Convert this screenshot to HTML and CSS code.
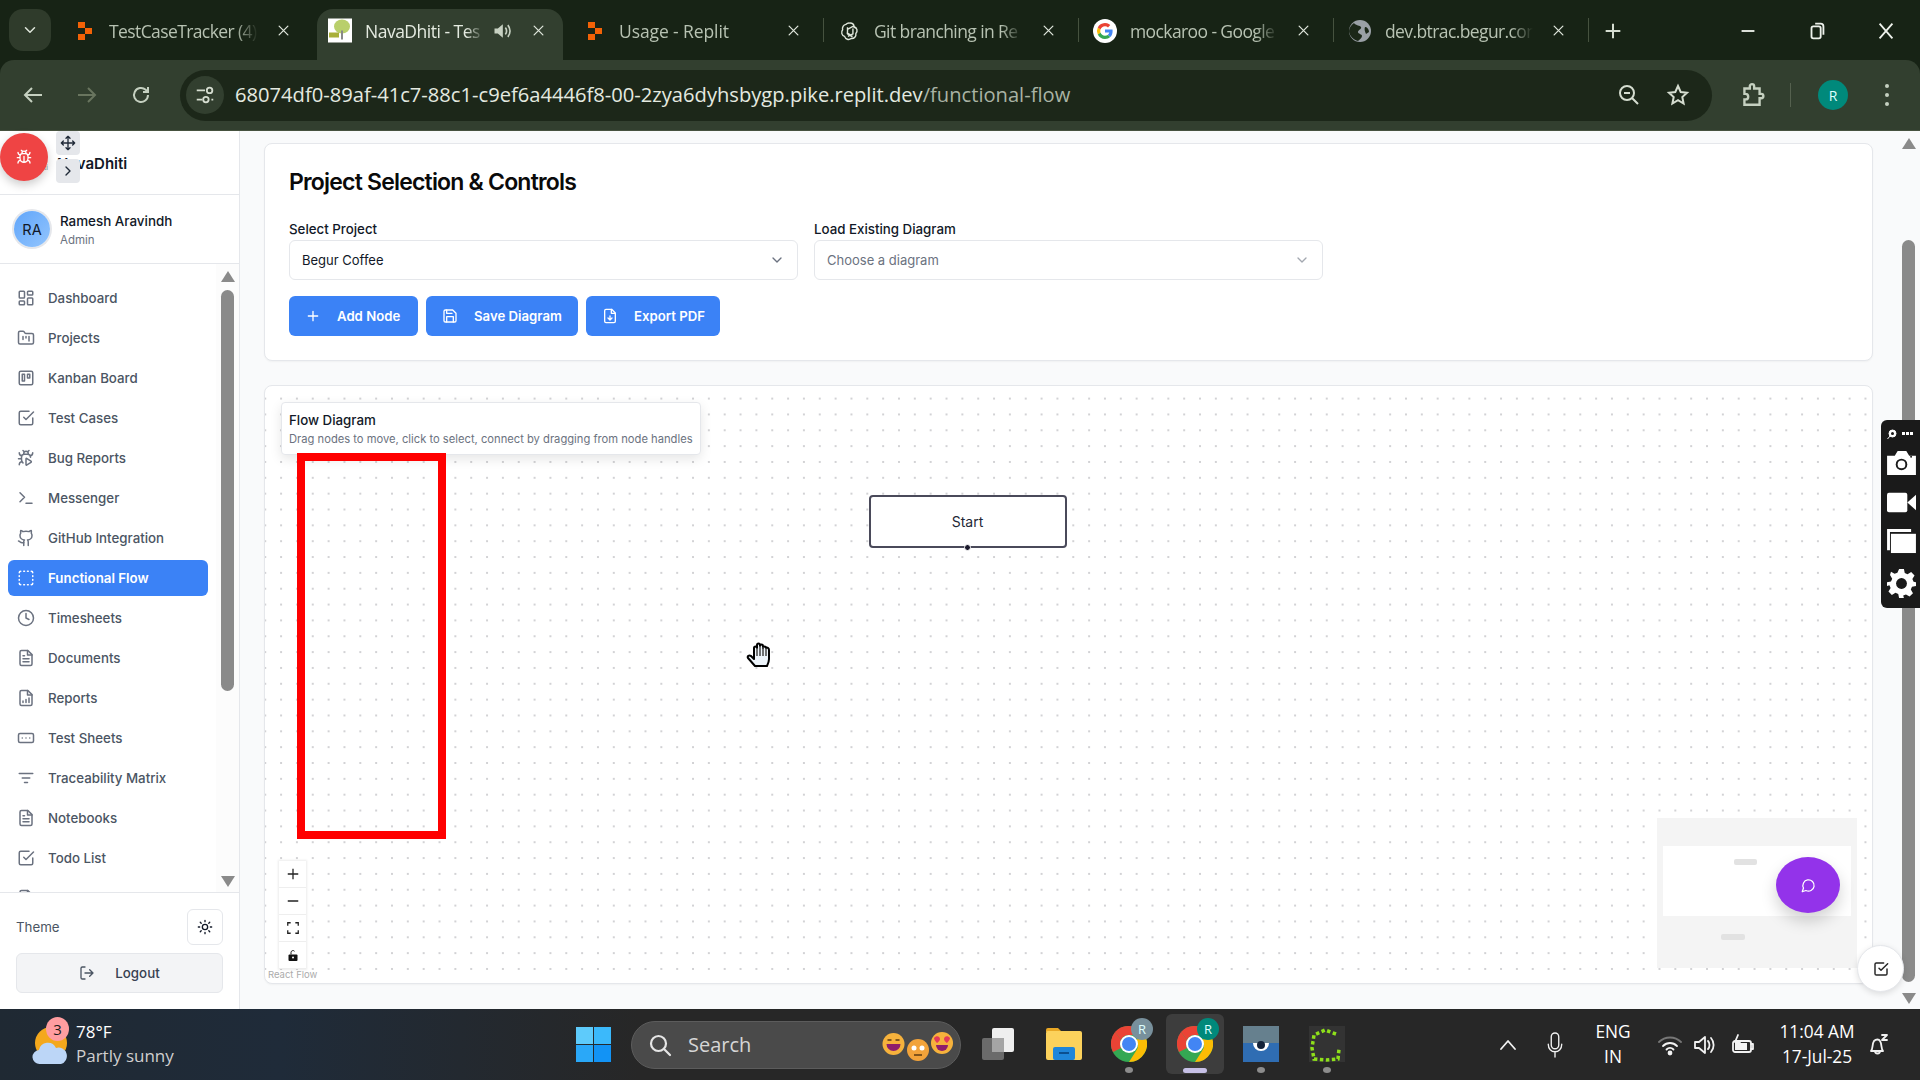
FILE: index.html
```html
<!DOCTYPE html>
<html lang="en">
<head>
<meta charset="utf-8">
<title>NavaDhiti - Functional Flow</title>
<link rel="stylesheet" href="styles.css">
</head>
<body>
<svg class="sprite" aria-hidden="true">
  <symbol id="i-dash" viewBox="0 0 24 24"><rect x="3" y="3" width="7" height="9" rx="1"/><rect x="14" y="3" width="7" height="5" rx="1"/><rect x="14" y="12" width="7" height="9" rx="1"/><rect x="3" y="16" width="7" height="5" rx="1"/></symbol>
  <symbol id="i-proj" viewBox="0 0 24 24"><path d="M4 20h16a2 2 0 0 0 2-2V8a2 2 0 0 0-2-2h-7.93a2 2 0 0 1-1.66-.9l-.82-1.2A2 2 0 0 0 7.93 3H4a2 2 0 0 0-2 2v13c0 1.1.9 2 2 2Z"/><path d="M8 10v4M12 10v2M16 10v6"/></symbol>
  <symbol id="i-kanban" viewBox="0 0 24 24"><rect x="3" y="3" width="18" height="18" rx="2"/><rect x="7" y="7" width="3" height="9"/><rect x="14" y="7" width="3" height="5"/></symbol>
  <symbol id="i-check" viewBox="0 0 24 24"><path d="m9 11 3 3L22 4"/><path d="M21 12v7a2 2 0 0 1-2 2H5a2 2 0 0 1-2-2V5a2 2 0 0 1 2-2h11"/></symbol>
  <symbol id="i-bugplay" viewBox="0 0 24 24"><path d="M12.765 21.522a.5.5 0 0 1-.765-.424v-8.196a.5.5 0 0 1 .765-.424l5.878 3.674a1 1 0 0 1 0 1.696z"/><path d="M14.12 3.88 16 2M18 11a4 4 0 0 0-4-4h-4a4 4 0 0 0-4 4v3a6.1 6.1 0 0 0 2 4.5M20.97 5c0 2.1-1.6 3.8-3.5 4M3 21c0-2.1 1.7-3.9 3.8-4M6 13H2M6.53 9C4.6 8.8 3 7.1 3 5M8 2l1.88 1.88M9 7.13v-1a3 3 0 0 1 6 0v1"/></symbol>
  <symbol id="i-term" viewBox="0 0 24 24"><path d="m4 17 6-6-6-6M12 19h8"/></symbol>
  <symbol id="i-github" viewBox="0 0 24 24"><path d="M15 22v-4a4.8 4.8 0 0 0-1-3.5c3 0 6-2 6-5.5.08-1.25-.27-2.48-1-3.5.28-1.15.28-2.35 0-3.5 0 0-1 0-3 1.5-2.64-.5-5.36-.5-8 0C6 2 5 2 5 2c-.3 1.15-.3 2.35 0 3.5A5.403 5.403 0 0 0 4 9c0 3.5 3 5.5 6 5.5-.39.49-.68 1.05-.85 1.65-.17.6-.22 1.23-.15 1.85v4"/><path d="M9 18c-4.51 2-5-2-7-2"/></symbol>
  <symbol id="i-flow" viewBox="0 0 24 24"><path d="M5 3a2 2 0 0 0-2 2M9 3h1M14 3h1M19 3a2 2 0 0 1 2 2M21 9v1M21 14v1M21 19a2 2 0 0 1-2 2M14 21h1M9 21h1M5 21a2 2 0 0 1-2-2M3 14v1M3 9v1"/></symbol>
  <symbol id="i-clock" viewBox="0 0 24 24"><circle cx="12" cy="12" r="10"/><path d="M12 6v6l4 2"/></symbol>
  <symbol id="i-file" viewBox="0 0 24 24"><path d="M14.5 2H6a2 2 0 0 0-2 2v16a2 2 0 0 0 2 2h12a2 2 0 0 0 2-2V7.5L14.5 2z"/><path d="M14 2v6h6M16 13H8M16 17H8M10 9H8"/></symbol>
  <symbol id="i-report" viewBox="0 0 24 24"><path d="M14.5 2H6a2 2 0 0 0-2 2v16a2 2 0 0 0 2 2h12a2 2 0 0 0 2-2V7.5L14.5 2z"/><path d="M14 2v6h6M8 18v-2M12 18v-4M16 18v-6"/></symbol>
  <symbol id="i-sheet" viewBox="0 0 24 24"><rect x="2" y="6" width="20" height="12" rx="2"/><path d="M12 12h.01M17 12h.01M7 12h.01"/></symbol>
  <symbol id="i-filter" viewBox="0 0 24 24"><path d="M3 6h18M7 12h10M10 18h4"/></symbol>
  <symbol id="i-chevdown" viewBox="0 0 24 24"><path d="m6 9 6 6 6-6"/></symbol>
  <symbol id="i-x" viewBox="0 0 24 24"><path d="M5 5l14 14M19 5 5 19"/></symbol>
  <symbol id="i-replit" viewBox="0 0 20 20"><path d="M3 1h7v6H3zM10 7h7v6h-7zM3 13h7v6H3z" fill="#f26207" stroke="none"/></symbol>
  <symbol id="chrome" viewBox="0 0 36 36"><circle cx="18" cy="18" r="18" fill="#34a853" stroke="none"/><path d="M18 0a18 18 0 0 1 15.600 9H18a9 9 0 0 0-8 5L4 6A18 18 0 0 1 18 0z" fill="#ea4335" stroke="none"/><path d="M2 26A18 18 0 0 1 4 6l6 8a9 9 0 0 0 0 8z" fill="#ea4335" stroke="none"/><path d="M33.600 9A18 18 0 0 1 18 36l7-11a9 9 0 0 0 0-11z" fill="#fbbc05" stroke="none"/><circle cx="18" cy="18" r="9" fill="#fff" stroke="none"/><circle cx="18" cy="18" r="7" fill="#4285f4" stroke="none"/></symbol>
</svg>

<header class="browser">
  <div class="tabstrip">
    <button class="tabs-btn"><svg class="ic16"><use href="#i-chevdown"/></svg></button>
    <div class="tab">
      <svg class="fav"><use href="#i-replit"/></svg>
      <span class="tab-title tight">TestCaseTracker (4)</span>
      <svg class="tab-x"><use href="#i-x"/></svg>
    </div>
    <div class="tab active">
      <svg class="fav-lg" viewBox="0 0 24 24"><rect width="24" height="24" fill="#fff"/><ellipse cx="14" cy="8" rx="8" ry="7" fill="#b9cf6b"/><rect x="13" y="12" width="2" height="9" fill="#888"/><rect x="1" y="14" width="10" height="5" fill="#a9b03a"/></svg>
      <span class="tab-title tighter">NavaDhiti - Tes</span>
      <svg class="tab-audio" viewBox="0 0 24 24"><path class="audio-body" d="M3 9v6h4l6 5V4L7 9z"/><path class="audio-wave" d="M16 8c2 2 2 6 0 8M19 5c3.500 4 3.500 10 0 14"/></svg>
      <svg class="tab-x"><use href="#i-x"/></svg>
    </div>
    <div class="tab">
      <svg class="fav"><use href="#i-replit"/></svg>
      <span class="tab-title">Usage - Replit</span>
      <svg class="tab-x"><use href="#i-x"/></svg>
      <i class="tab-sep"></i>
    </div>
    <div class="tab">
      <svg class="fav" viewBox="0 0 24 24"><path class="gpt" d="M12 2.500a5 5 0 0 1 5 4.200 5 5 0 0 1 2 8.300 5 5 0 0 1-5.500 6 5 5 0 0 1-8-2.500 5 5 0 0 1-2.300-8 5 5 0 0 1 4-6.500A5 5 0 0 1 12 2.500zM9 7.500v8l6 3.500M9 10l6.500-3.500 4 2.500M8 14l7 4M15.500 9v6.500l-6 3"/></svg>
      <span class="tab-title tight">Git branching in Re</span>
      <svg class="tab-x"><use href="#i-x"/></svg>
      <i class="tab-sep"></i>
    </div>
    <div class="tab">
      <svg class="fav-g" viewBox="0 0 24 24"><circle cx="12" cy="12" r="12" fill="#fff"/><path d="M19.600 12.200c0-.6 0-1.100-.1-1.600H12v3h4.300a3.700 3.700 0 0 1-1.600 2.400l2.600 2c1.500-1.400 2.300-3.400 2.300-5.800z" fill="#4285f4"/><path d="M12 20c2.200 0 4-.7 5.300-2l-2.600-2c-.7.500-1.600.8-2.700.8-2.100 0-3.900-1.400-4.500-3.300l-2.700 2.100A8 8 0 0 0 12 20z" fill="#34a853"/><path d="M7.500 13.500a4.800 4.800 0 0 1 0-3L4.800 8.400a8 8 0 0 0 0 7.200z" fill="#fbbc05"/><path d="M12 7.200c1.200 0 2.200.4 3 1.200l2.300-2.300A8 8 0 0 0 4.800 8.400l2.700 2.100c.6-1.900 2.400-3.300 4.500-3.300z" fill="#ea4335"/></svg>
      <span class="tab-title tight">mockaroo - Google</span>
      <svg class="tab-x"><use href="#i-x"/></svg>
      <i class="tab-sep"></i>
    </div>
    <div class="tab">
      <svg class="fav-g" viewBox="0 0 24 24"><circle cx="12" cy="12" r="11" fill="#9aa0a6"/><path d="M6 4c2 3 6 2 7 4s-3 3-3 5 4 2 4 4-2 3-4 5c-4-1-9-5-9-10 0-3 2-6 5-8zM17 8c2 0 4 2 4 5l-3 2c-1-2-2-5-1-7z" fill="#1b2718"/></svg>
      <span class="tab-title tight">dev.btrac.begur.com</span>
      <svg class="tab-x"><use href="#i-x"/></svg>
      <i class="tab-sep"></i>
    </div>
    <svg class="new-tab" viewBox="0 0 24 24"><path d="M12 4v16M4 12h16"/></svg>
    <div class="win-ctrls">
      <svg class="win-ic" viewBox="0 0 24 24"><path d="M5 12h14"/></svg>
      <svg class="win-ic" viewBox="0 0 24 24"><rect x="6" y="7" width="10" height="13" rx="2"/><path d="M10 4h6a3 3 0 0 1 3 3v9"/></svg>
      <svg class="win-ic" viewBox="0 0 24 24"><path d="M5 4l14 16M19 4 5 20"/></svg>
    </div>
  </div>
  <div class="toolbar">
    <svg class="nav-ic" viewBox="0 0 24 24"><path d="M21 12H4M11 5l-7 7 7 7"/></svg>
    <svg class="nav-ic dim" viewBox="0 0 24 24"><path d="M3 12h17M13 5l7 7-7 7"/></svg>
    <svg class="nav-ic" viewBox="0 0 24 24"><path d="M19 12a7 7 0 1 1-2.300-5.200L19 9M19 4v5h-5"/></svg>
    <div class="omnibox">
      <span class="site-btn"><svg class="site-ic" viewBox="0 0 24 24"><path d="M3 7h9M19 17h2M3 17h6"/><circle cx="17" cy="7" r="3"/><circle cx="13" cy="17" r="3"/></svg></span>
      <span class="url">68074df0-89af-41c7-88c1-c9ef6a4446f8-00-2zya6dyhsbygp.pike.replit.dev<span class="url-path">/functional-flow</span></span>
      <svg class="omni-ic" viewBox="0 0 24 24"><circle cx="10" cy="10" r="7"/><path d="M7 10h6M15 15l6 6"/></svg>
      <svg class="omni-ic" viewBox="0 0 24 24"><path d="m12 3 2.700 6 6.300.700-4.700 4.300 1.300 6.500-5.600-3.300-5.600 3.300 1.300-6.500L3 9.700 9.300 9z"/></svg>
    </div>
    <svg class="ext-ic" viewBox="0 0 24 24"><path d="M5 6h5V4a2 2 0 0 1 4 0v2h5v5h1.500a2 2 0 0 1 0 4H19v6H5v-5h1a2.500 2.500 0 0 0 0-5H5z"/></svg>
    <i class="tool-sep"></i>
    <span class="profile">R</span>
    <span class="kebab"><i></i><i></i><i></i></span>
  </div>
</header>

<div class="page">
  <aside class="sidebar">
    <div class="brand">
      <span class="brand-logo">iti</span>
      <span class="brand-name">NavaDhiti</span>
    </div>
    <div class="user">
      <span class="avatar">RA</span>
      <div class="user-text">
        <div class="user-name">Ramesh Aravindh</div>
        <div class="user-role">Admin</div>
      </div>
    </div>
    <div class="nav-wrap">
      <nav class="nav">
        <a class="nav-item"><svg class="nav-svg"><use href="#i-dash"/></svg>Dashboard</a>
        <a class="nav-item"><svg class="nav-svg"><use href="#i-proj"/></svg>Projects</a>
        <a class="nav-item"><svg class="nav-svg"><use href="#i-kanban"/></svg>Kanban Board</a>
        <a class="nav-item"><svg class="nav-svg"><use href="#i-check"/></svg>Test Cases</a>
        <a class="nav-item"><svg class="nav-svg"><use href="#i-bugplay"/></svg>Bug Reports</a>
        <a class="nav-item"><svg class="nav-svg"><use href="#i-term"/></svg>Messenger</a>
        <a class="nav-item"><svg class="nav-svg"><use href="#i-github"/></svg>GitHub Integration</a>
        <a class="nav-item current"><svg class="nav-svg"><use href="#i-flow"/></svg>Functional Flow</a>
        <a class="nav-item"><svg class="nav-svg"><use href="#i-clock"/></svg>Timesheets</a>
        <a class="nav-item"><svg class="nav-svg"><use href="#i-file"/></svg>Documents</a>
        <a class="nav-item"><svg class="nav-svg"><use href="#i-report"/></svg>Reports</a>
        <a class="nav-item"><svg class="nav-svg"><use href="#i-sheet"/></svg>Test Sheets</a>
        <a class="nav-item"><svg class="nav-svg"><use href="#i-filter"/></svg>Traceability Matrix</a>
        <a class="nav-item"><svg class="nav-svg"><use href="#i-file"/></svg>Notebooks</a>
        <a class="nav-item"><svg class="nav-svg"><use href="#i-check"/></svg>Todo List</a>
        <a class="nav-item partial"><svg class="nav-svg"><use href="#i-file"/></svg></a>
      </nav>
      <div class="sbar side-bar">
        <i class="arrow up"></i>
        <i class="thumb"></i>
        <i class="spacer"></i>
        <i class="arrow down"></i>
      </div>
    </div>
    <div class="side-foot">
      <div class="theme-row">
        <span class="theme-label">Theme</span>
        <button class="theme-btn"><svg class="sun" viewBox="0 0 24 24"><circle cx="12" cy="12" r="4"/><path d="M12 2v2M12 20v2M4.900 4.900l1.400 1.400M17.700 17.700l1.400 1.400M2 12h2M20 12h2M6.300 17.700l-1.400 1.400M19.100 4.900l-1.400 1.400"/></svg></button>
      </div>
      <button class="logout"><svg class="logout-ic" viewBox="0 0 24 24"><path d="M9 21H5a2 2 0 0 1-2-2V5a2 2 0 0 1 2-2h4M16 17l5-5-5-5M21 12H9"/></svg>Logout</button>
    </div>
  </aside>

  <main class="main">
    <section class="card controls">
      <h1 class="card-title">Project Selection &amp; Controls</h1>
      <div class="fields">
        <div class="field">
          <label class="field-label">Select Project</label>
          <div class="select"><span>Begur Coffee</span><svg class="sel-ic"><use href="#i-chevdown"/></svg></div>
        </div>
        <div class="field">
          <label class="field-label">Load Existing Diagram</label>
          <div class="select placeholder"><span>Choose a diagram</span><svg class="sel-ic"><use href="#i-chevdown"/></svg></div>
        </div>
      </div>
      <div class="actions">
        <button class="btn add"><svg class="btn-ic" viewBox="0 0 24 24"><path d="M5 12h14M12 5v14"/></svg>Add Node</button>
        <button class="btn save"><svg class="btn-ic" viewBox="0 0 24 24"><path d="M19 21H5a2 2 0 0 1-2-2V5a2 2 0 0 1 2-2h11l5 5v11a2 2 0 0 1-2 2z"/><path d="M17 21v-8H7v8M7 3v5h8"/></svg>Save Diagram</button>
        <button class="btn export"><svg class="btn-ic" viewBox="0 0 24 24"><path d="M14.500 2H6a2 2 0 0 0-2 2v16a2 2 0 0 0 2 2h12a2 2 0 0 0 2-2V7.500L14.500 2z"/><path d="M14 2v6h6M12 18v-6M9 15l3 3 3-3"/></svg>Export PDF</button>
      </div>
    </section>

    <section class="card canvas">
      <div class="flow-panel">
        <div class="flow-title">Flow Diagram</div>
        <div class="flow-sub">Drag nodes to move, click to select, connect by dragging from node handles</div>
      </div>
      <div class="red-box"></div>
      <div class="node">Start<i class="handle"></i></div>
      <div class="rf-controls">
        <span class="rf-btn"><svg class="rf-ic" viewBox="0 0 24 24"><path d="M12 3v18M3 12h18"/></svg></span>
        <span class="rf-btn"><svg class="rf-ic" viewBox="0 0 24 24"><path d="M3 12h18"/></svg></span>
        <span class="rf-btn"><svg class="rf-ic" viewBox="0 0 24 24"><path d="M3 8V3h5M16 3h5v5M21 16v5h-5M8 21H3v-5"/></svg></span>
        <span class="rf-btn"><svg class="rf-lock" viewBox="0 0 24 24"><rect x="3" y="10" width="18" height="13" rx="2"/><path class="lock-arc" d="M8 10V6a4 4 0 0 1 7-2.500"/><circle class="lock-hole" cx="12" cy="16" r="2"/></svg></span>
      </div>
      <span class="rf-attr">React Flow</span>
      <div class="minimap">
        <div class="mm-view"><i class="mm-node"></i></div>
        <i class="mm-node2"></i>
      </div>
      <button class="chat"><svg class="chat-ic" viewBox="0 0 24 24"><path d="M7.900 20A9 9 0 1 0 4 16.100L2 22Z"/></svg></button>
    </section>
  </main>

  <div class="sbar page-bar">
    <i class="arrow up"></i>
    <i class="thumb"></i>
    <i class="arrow down"></i>
  </div>

  <button class="bug-fab"><svg class="bug-ic" viewBox="0 0 24 24"><path d="M8 2l1.880 1.880M14.120 3.880 16 2M9 7.130v-1a3 3 0 1 1 6 0v1M12 20c-3.300 0-6-2.700-6-6v-3a4 4 0 0 1 4-4h4a4 4 0 0 1 4 4v3c0 3.300-2.700 6-6 6M12 20v-9M6.530 9C4.600 8.800 3 7.100 3 5M6 13H2M3 21c0-2.100 1.700-3.900 3.800-4M20.970 5c0 2.100-1.600 3.800-3.500 4M22 13h-4M17.200 17c2.100.1 3.800 1.900 3.800 4"/></svg></button>
  <span class="mini-btn move"><svg class="mini-ic" viewBox="0 0 24 24"><path d="M12 2v20M2 12h20M9 5l3-3 3 3M9 19l3 3 3-3M5 9l-3 3 3 3M19 9l3 3-3 3"/></svg></span>
  <span class="mini-btn chev"><svg class="mini-ic" viewBox="0 0 24 24"><path d="m9 6 6 6-6 6"/></svg></span>

  <div class="cap-widget">
    <div class="cap-top"><svg class="cap-logo" viewBox="0 0 24 24"><circle cx="13" cy="11" r="7"/><circle class="cap-hole" cx="13" cy="11" r="3"/><path class="cap-tail" d="M3 22l6-7"/></svg><span class="cap-dots"><i></i><i></i><i></i></span></div>
    <svg class="cap-ic" viewBox="0 0 30 26"><path d="M0 6h8l3-5h9l3 5h7v20H0z"/><circle class="cap-hole" cx="15" cy="15" r="6"/><circle class="cap-ring" cx="15" cy="15" r="4"/><circle class="cap-hole" cx="25" cy="7" r="1"/></svg>
    <svg class="cap-ic" viewBox="0 0 30 20"><rect x="0" y="0" width="21" height="20" rx="2"/><path d="M21 10l9-8v16z"/></svg>
    <svg class="cap-ic" viewBox="0 0 30 26"><path d="M0 0h25v3H3v19H0z"/><rect x="4" y="5" width="26" height="20"/></svg>
    <svg class="cap-ic gear" viewBox="0 0 24 24"><path d="M10 0h4l.7 3.300 2.300 1 3-1.800 2.800 2.800-1.800 3 1 2.300L24 11v3l-3.300.700-1 2.300 1.800 3-2.800 2.800-3-1.800-2.300 1L14 24h-4l-.7-3.300-2.300-1-3 1.800-2.800-2.800 1.800-3-1-2.300L0 14v-3l3.300-.700 1-2.300-1.800-3L3.300 2.200l3 1.800 2.300-1z"/><circle class="cap-hole" cx="12" cy="12" r="4.500"/></svg>
  </div>

  <button class="todo-fab"><svg class="todo-ic" viewBox="0 0 24 24"><path d="M21 12v7a2 2 0 0 1-2 2H5a2 2 0 0 1-2-2V5a2 2 0 0 1 2-2h11"/><path d="m9 11 3 3L22 4"/></svg></button>

  <svg class="hand" viewBox="0 0 28 28"><path class="hand-fill" d="M9 25 2 17c-1-2 1-3 3-2l3 3V7c0-2 3-2 3 0V4c0-2 3-2 3 0v1c0-2 3-2 3 0v2c0-2 3-2 3 0 1-1 3 0 3 2v9c0 3-1 5-2 7z"/><path class="hand-line" d="M11 7v8M14 5v10M17 6v9M20 8v7"/></svg>
</div>

<footer class="taskbar">
  <div class="weather">
    <svg class="weather-ic" viewBox="0 0 36 40"><circle cx="19" cy="16" r="16" fill="#f4a81c"/><path d="M8 37a7 7 0 0 1-1-14 9 9 0 0 1 17-2 8 8 0 0 1 5 16z" fill="#bcd6f7"/></svg>
    <span class="weather-badge">3</span>
    <div class="weather-text">
      <div class="temp">78°F</div>
      <div class="cond">Partly sunny</div>
    </div>
  </div>
  <svg class="win-logo" viewBox="0 0 36 36"><rect x="0" y="0" width="17.500" height="17.500" fill="#5ecbfb"/><rect x="18.500" y="0" width="17.500" height="17.500" fill="#3bb9fb"/><rect x="0" y="18.500" width="17.500" height="17.500" fill="#2aa8f8"/><rect x="18.500" y="18.500" width="17.500" height="17.500" fill="#1293f5"/></svg>
  <div class="search">
    <svg class="search-ic" viewBox="0 0 24 24"><circle cx="10.500" cy="10.500" r="7.500"/><path d="m16 16 6 6"/></svg>
    <span class="search-text">Search</span>
    <svg class="emoji" viewBox="0 0 80 36">
      <g transform="translate(1.500 0)"><circle cx="14" cy="17" r="11" fill="#f6b23c"/><path d="M7 17h14a7 7 0 0 1-14 0z" fill="#8e1e6b"/><path d="M8 13h4M16 13h4" stroke="#5b3a12" stroke-width="1.500"/></g>
      <g transform="translate(5 -1)"><circle cx="35" cy="24" r="11" fill="#f2a33a"/><circle cx="31" cy="22" r="2.500" fill="#fff"/><circle cx="39" cy="22" r="2.500" fill="#fff"/><path d="M31 29h8" stroke="#5b3a12" stroke-width="1.500"/></g>
      <g transform="translate(8 3)"><circle cx="56" cy="13" r="11" fill="#f6b23c"/><path d="M48 8c2-3 6-2 6 1 0 2-3 4-3 4s-3-3-3-5zM58 9c0-3 4-4 6-1 0 2-3 5-3 5s-3-2-3-4z" fill="#e23a5a"/><path d="M50 15h12a6 6 0 0 1-12 0z" fill="#8e1e6b"/></g>
    </svg>
  </div>
  <div class="tb-apps">
    <span class="tb-slot"><svg class="tb-ic" viewBox="0 0 36 36"><rect x="2" y="12" width="22" height="22" rx="2" fill="#6b6b6b"/><rect x="12" y="2" width="22" height="24" rx="2" fill="#efefef"/><rect x="12" y="12" width="12" height="14" fill="#a5a5a5"/></svg></span>
    <span class="tb-slot"><svg class="tb-ic" viewBox="0 0 36 36"><path d="M0 4a2 2 0 0 1 2-2h10l4 4H0z" fill="#e9a825"/><rect x="0" y="5" width="36" height="29" rx="2" fill="#fcd25c"/><rect x="7" y="21" width="22" height="13" rx="2" fill="#1f86d9"/><rect x="13" y="26" width="10" height="2" fill="#0b4f8f"/></svg></span>
    <span class="tb-slot dotted"><svg class="tb-ic" viewBox="0 0 36 36"><use href="#chrome"/><circle cx="31" cy="3" r="11" fill="#78909c"/><text class="ic-letter" x="31" y="8">R</text></svg></span>
    <span class="tb-slot running"><svg class="tb-ic" viewBox="0 0 36 36"><use href="#chrome"/><circle cx="31" cy="3" r="11" fill="#00897b"/><text class="ic-letter" x="31" y="8">R</text></svg></span>
    <span class="tb-slot dotted"><svg class="tb-ic" viewBox="0 0 36 36"><rect width="36" height="17" fill="#66808e"/><rect y="17" width="36" height="19" fill="#2f6db3"/><path d="M10 17h16a8 8 0 0 1-16 0z" fill="#fff"/><circle cx="18" cy="19" r="4" fill="#14233a"/></svg></span>
    <span class="tb-slot dotted"><svg class="tb-ic" viewBox="0 0 36 36"><rect width="36" height="36" fill="#333"/><path d="M27 8 16 4 5 9 3 22l2 11 12 1 12-1 1-10" fill="none" stroke="#8ee01a" stroke-width="3.500" stroke-dasharray="3.500 2.500"/></svg></span>
  </div>
  <div class="tray">
    <span class="tray-slot t-up"><svg class="tray-ic" viewBox="0 0 24 24"><path d="m5 16 7-8 7 8"/></svg></span>
    <span class="tray-slot t-mic"><svg class="tray-ic tall" viewBox="0 0 24 36"><rect x="7" y="2" width="10" height="21" rx="5"/><path d="M3 17c0 6 4 10 9 10s9-4 9-10M12 27v7"/></svg></span>
    <span class="tray-slot t-lang"><span>ENG</span><span>IN</span></span>
    <span class="tray-slot t-wifi"><svg class="tray-ic" viewBox="0 0 24 24"><path class="wifi-dim" d="M1 9c6-6 16-6 22 0"/><path d="M5 13c4-4 10-4 14 0M8.500 16.500c2-2 5-2 7 0"/><circle class="wifi-dot" cx="12" cy="20" r="1.500"/></svg></span>
    <span class="tray-slot t-vol"><svg class="tray-ic" viewBox="0 0 24 24"><path d="M2 9v6h4l6 5V4L6 9zM15 8c2 2 2 6 0 8M18 5c3.500 4 3.500 10 0 14"/></svg></span>
    <span class="tray-slot t-batt"><svg class="tray-ic" viewBox="0 0 24 24"><rect x="3" y="8" width="18" height="11" rx="2"/><rect class="batt-fill" x="5" y="10" width="12" height="7"/><path d="M21 11h2v5h-2M8 2 5 9h5L7 14"/></svg></span>
    <span class="tray-slot t-time"><span>11:04 AM</span><span>17-Jul-25</span></span>
    <span class="tray-slot t-bell"><svg class="tray-ic" viewBox="0 0 24 24"><path d="M5 18c2-2 1-7 3-10 2-2 5-2 6 0 2 3 1 8 3 10zM9 18a2.500 2.500 0 0 0 5 0M16 2h5l-5 5h5"/></svg></span>
  </div>
</footer>
</body>
</html>
```
FILE: styles.css
```css
* { box-sizing: border-box; }
html, body { margin: 0; padding: 0; }
body {
  width: 1920px;
  height: 1080px;
  overflow: hidden;
  display: flex;
  flex-direction: column;
  font-family: Inter, "Noto Sans", sans-serif;
  color: #0f172a;
  background: #f9fafb;
}
button { font-family: inherit; border: 0; padding: 0; }
i { display: block; font-style: normal; }
svg { display: block; }
.sprite { position: absolute; width: 0; height: 0; }
symbol { fill: none; stroke: currentColor; stroke-width: 2; stroke-linecap: round; stroke-linejoin: round; }

/* Browser chrome */
.browser { flex: none; height: 131px; background: #172315; border-bottom: 1px solid #46523f; font-family: "Open Sans", "Noto Sans", sans-serif; }
.tabstrip { height: 60px; display: flex; align-items: flex-start; position: relative; }
.tabs-btn { width: 42px; height: 42px; margin: 9px 11px 0 9px; border-radius: 14px; background: #2f3b2b; color: #dfe6db; display: flex; align-items: center; justify-content: center; }
.ic16 { width: 18px; height: 18px; stroke-width: 3; }
.tab { width: 255px; height: 51px; margin-top: 9px; display: flex; align-items: center; padding: 0 26px 8px 13px; color: #b7c2b2; font-size: 17.500px; letter-spacing: -0.1px; position: relative; flex: none; }
.tab.active { width: 246px; margin-right: 9px; padding: 0 17px 8px 11px; background: #323f2f; color: #e4eae0; border-radius: 16px 16px 0 0; }
.tab.active .tab-x { margin-left: 19px; }
.fav { width: 20px; height: 20px; flex: none; margin-right: 14px; }
.fav-lg { width: 24px; height: 25px; flex: none; margin-right: 13px; }
.fav-g { width: 24px; height: 24px; flex: none; margin-right: 13px; margin-left: -2px; }
.gpt { fill: none; stroke: #dfe6db; stroke-width: 1.700; stroke-linejoin: round; }
.tab-title { flex: 1; min-width: 0; white-space: nowrap; overflow: hidden; -webkit-mask-image: linear-gradient(90deg, #000 85%, transparent 100%); mask-image: linear-gradient(90deg, #000 85%, transparent 100%); }
.tab-title.tight { letter-spacing: -0.6px; }
.tab-title.tighter { letter-spacing: -0.5px; }
.tab-x { width: 15px; height: 15px; flex: none; margin-left: 18px; color: #dfe6db; stroke-width: 2.500; }
.tab-audio { width: 20px; height: 20px; flex: none; margin-left: 8px; }
.audio-body { fill: #c7d1c2; }
.audio-wave { fill: none; stroke: #c7d1c2; stroke-width: 2; }
.tab-sep { position: absolute; right: 3px; top: 9px; width: 1px; height: 24px; background: #46523f; }
.new-tab { width: 22px; height: 22px; margin: 20px 0 0 10px; fill: none; stroke: #d5ddd0; stroke-width: 2.200; }
.win-ctrls { position: absolute; right: 23px; top: 20px; display: flex; gap: 47px; }
.win-ic { width: 22px; height: 22px; fill: none; stroke: #eef2ec; stroke-width: 2; }

.toolbar { height: 70px; background: #323f2f; border-radius: 14px 14px 0 0; display: flex; align-items: center; padding: 0 17px 0 21px; }
.nav-ic { width: 24px; height: 24px; fill: none; stroke: #c5d0c0; stroke-width: 2; margin-right: 30px; flex: none; }
.nav-ic.dim { stroke: #69755f; }
.nav-ic:nth-child(3) { margin-right: 27px; }
.omnibox { flex: none; width: 1532px; height: 51px; background: #1c2719; border-radius: 26px; display: flex; align-items: center; padding: 0 22px 0 6px; }
.site-btn { width: 38px; height: 38px; border-radius: 50%; background: #323f2f; display: flex; align-items: center; justify-content: center; margin-right: 11px; }
.site-ic { width: 22px; height: 22px; fill: none; stroke: #d5ddd0; stroke-width: 2; }
.url { flex: 1; font-size: 20.150px; color: #e4eae0; white-space: nowrap; margin-top: -2px; }
.url-path { color: #a9b3a4; }
.omni-ic { width: 24px; height: 24px; fill: none; stroke: #d5ddd0; stroke-width: 2; margin-left: 25px; }
.ext-ic { width: 26px; height: 26px; margin-left: 27px; fill: none; stroke: #c5d0c0; stroke-width: 2.200; flex: none; }
.tool-sep { width: 1px; height: 24px; background: #55614f; margin-left: 25px; }
.profile { width: 30px; height: 30px; margin-left: 27px; border-radius: 50%; background: #00897b; color: #dff; font-size: 14px; display: flex; align-items: center; justify-content: center; flex: none; }
.kebab { margin-left: 37px; display: flex; flex-direction: column; gap: 5px; }
.kebab i { width: 4px; height: 4px; border-radius: 50%; background: #c5d0c0; }

/* Page */
.page { flex: 1; min-height: 0; display: flex; position: relative; }
.sidebar { width: 240px; flex: none; background: #fff; border-right: 1px solid #e5e7eb; display: flex; flex-direction: column; }
.brand { height: 64px; border-bottom: 1px solid #e5e7eb; display: flex; align-items: center; padding: 2px 0 0 16px; }
.brand-logo { width: 41px; padding-right: 9px; padding-top: 8px; text-align: right; font-size: 7px; color: #8a8a8a; }
.brand-name { font-size: 15px; font-weight: 600; color: #111827; }
.user { height: 69px; border-bottom: 1px solid #e5e7eb; display: flex; align-items: center; padding-left: 14px; gap: 10px; }
.avatar { width: 36px; height: 36px; border-radius: 50%; background: linear-gradient(135deg, #60a5fa, #93c5fd); box-shadow: 0 0 0 2px #e5e7eb; display: flex; align-items: center; justify-content: center; font-size: 14.500px; color: #111827; }
.user-text { padding-top: 1px; }
.user-name { font-size: 13.400px; font-weight: 500; color: #111827; line-height: 19px; }
.user-role { font-size: 11.500px; color: #6b7280; line-height: 16px; margin-top: 1px; }
.nav-wrap { flex: 1; min-height: 0; display: flex; overflow: hidden; }
.nav { flex: 1; padding: 16px 8px 0 8px; display: flex; flex-direction: column; gap: 4px; min-width: 0; }
.nav-item { flex: none; height: 36px; display: flex; align-items: center; gap: 13px; padding: 0 9px; border-radius: 6px; font-size: 13.300px; font-weight: 500; color: #4b5563; white-space: nowrap; }
.nav-svg { width: 18px; height: 18px; flex: none; color: #6b7280; }
.nav-item.current { background: #3b82f6; color: #fff; font-weight: 600; }
.nav-item.current .nav-svg { color: #fff; }

.sbar { display: flex; flex-direction: column; align-items: center; flex: none; }
.side-bar { width: 23px; padding: 7px 0 5px; background: #fcfcfc; }
.thumb { width: 13px; border-radius: 7px; background: #8a8a8a; }
.side-bar .thumb { height: 401px; margin-top: 8px; }
.spacer { flex: 1; }
.arrow { width: 0; height: 0; border-left: 7.500px solid transparent; border-right: 7.500px solid transparent; flex: none; }
.arrow.up { border-bottom: 11px solid #8a8a8a; }
.arrow.down { border-top: 11px solid #8a8a8a; }

.side-foot { flex: none; height: 117px; border-top: 1px solid #e5e7eb; padding: 16px 16px 16px; display: flex; flex-direction: column; gap: 8px; }
.theme-row { display: flex; align-items: center; justify-content: space-between; height: 36px; }
.theme-label { font-size: 13.300px; color: #4b5563; }
.theme-btn { width: 36px; height: 36px; background: #fff; border: 1px solid #e5e7eb; border-radius: 6px; display: flex; align-items: center; justify-content: center; }
.sun { width: 16px; height: 16px; fill: none; stroke: #111827; stroke-width: 2; stroke-linecap: round; }
.logout { height: 40px; background: #f3f4f6; border: 1px solid #e5e7eb; border-radius: 6px; display: flex; align-items: center; justify-content: center; gap: 20px; font-size: 13.300px; font-weight: 500; color: #374151; }
.logout-ic { width: 16px; height: 16px; fill: none; stroke: #4b5563; stroke-width: 2; stroke-linecap: round; stroke-linejoin: round; }

.main { flex: 1; min-width: 0; padding: 12px 24px 0; display: flex; flex-direction: column; gap: 24px; }
.card { background: #fff; border: 1px solid #e5e7eb; border-radius: 8px; box-shadow: 0 1px 2px rgba(0,0,0,.04); }
.controls { height: 218px; flex: none; padding: 24px 24px 0; }
.card-title { margin: 0; font-size: 23px; line-height: 28px; font-weight: 600; letter-spacing: -0.8px; color: #0a0a0a; }
.fields { display: flex; gap: 16px; margin-top: 24px; }
.field { width: 509px; }
.field-label { display: block; font-size: 13.300px; font-weight: 500; line-height: 18px; color: #111827; margin-bottom: 2px; }
.select { height: 40px; border: 1px solid #e5e7eb; border-radius: 6px; display: flex; align-items: center; justify-content: space-between; padding: 0 12px; font-size: 13px; color: #111827; }
.select.placeholder { color: #6b7280; }
.sel-ic { width: 16px; height: 16px; color: #6b7280; }
.placeholder .sel-ic { color: #a3a8b0; }
.actions { display: flex; gap: 8px; margin-top: 16px; }
.btn { height: 40px; background: #3b82f6; color: #fff; border-radius: 6px; display: flex; align-items: center; font-size: 13.200px; font-weight: 600; }
.btn.add { width: 129px; padding-left: 16px; gap: 16px; }
.btn.save { width: 152px; padding-left: 16px; gap: 16px; }
.btn.export { width: 134px; padding-left: 16px; gap: 16px; }
.btn-ic { width: 16px; height: 16px; flex: none; fill: none; stroke: #fff; stroke-width: 2; stroke-linecap: round; stroke-linejoin: round; }

.canvas { height: 599px; flex: none; position: relative; overflow: hidden; background-color: #fff; background-image: radial-gradient(circle at center, #bcbcc0 0.5px, transparent 1.100px); background-size: 15.850px 15.850px; background-position: -7.700px 4.680px; }
.flow-panel { position: absolute; left: 16px; top: 16px; width: 420px; height: 53px; background: #fff; border: 1px solid #e5e7eb; border-radius: 4px; box-shadow: 0 4px 12px rgba(0,0,0,.1); padding: 9px 7px 0; z-index: 1; }
.flow-title { font-size: 13.300px; font-weight: 500; color: #111827; line-height: 17px; }
.flow-sub { font-size: 11.200px; color: #6b7280; line-height: 15px; margin-top: 3px; white-space: nowrap; }
.red-box { position: absolute; left: 32px; top: 67px; width: 149px; height: 386px; border: 8px solid #ff0000; z-index: 2; }
.node { position: absolute; left: 603.500px; top: 109px; width: 198px; height: 53px; background: #fff; border: 2px solid #4a4a5a; border-radius: 4px; display: flex; align-items: center; justify-content: center; font-size: 14px; color: #1f2937; }
.handle { position: absolute; left: 93px; bottom: -5px; width: 5px; height: 5px; border-radius: 50%; background: #1a192b; border: 1px solid #fff; box-sizing: content-box; }
.rf-controls { position: absolute; left: 14px; top: 475px; width: 27px; background: #fff; box-shadow: 0 0 2px 1px rgba(0,0,0,.08); display: flex; flex-direction: column; }
.rf-btn { height: 27px; border-bottom: 1px solid #eee; display: flex; align-items: center; justify-content: center; }
.rf-ic { width: 14px; height: 14px; fill: none; stroke: #222; stroke-width: 2.200; }
.rf-lock { width: 12px; height: 13px; fill: #111; }
.lock-arc { fill: none; stroke: #111; stroke-width: 2; }
.lock-hole { fill: #fff; }
.rf-attr { position: absolute; left: 3px; bottom: 3px; font-size: 9.500px; color: #ababab; }
.minimap { position: absolute; right: 15px; bottom: 15px; width: 200px; height: 150px; background: #f4f4f4; }
.mm-view { position: absolute; left: 6px; top: 28px; width: 188px; height: 70px; background: #fff; }
.mm-node { position: absolute; left: 71px; top: 13px; width: 23px; height: 6px; background: #e2e2e2; border-radius: 2px; }
.mm-node2 { position: absolute; left: 64px; top: 116px; width: 24px; height: 6px; background: #e2e2e2; border-radius: 2px; }
.chat { position: absolute; left: 1511px; top: 471px; width: 64px; height: 56px; border-radius: 50%; background: #9333ea; box-shadow: 0 8px 16px rgba(0,0,0,.18); display: flex; align-items: center; justify-content: center; }
.chat-ic { width: 15px; height: 15px; fill: none; stroke: #fff; stroke-width: 2; stroke-linejoin: round; }

.page-bar { width: 23px; padding: 7px 0 5px; }
.page-bar .thumb { height: 742px; margin-top: 91px; margin-bottom: 11px; }

.bug-fab { position: absolute; left: 0; top: 2px; width: 48px; height: 48px; border-radius: 50%; background: #ef4444; box-shadow: 0 4px 10px rgba(0,0,0,.2); display: flex; align-items: center; justify-content: center; }
.bug-ic { width: 16px; height: 16px; fill: none; stroke: #fff; stroke-width: 2; stroke-linecap: round; }
.mini-btn { position: absolute; left: 56px; width: 24px; height: 24px; border-radius: 4px; background: #e5e7eb; display: flex; align-items: center; justify-content: center; }
.mini-btn.move { top: 0; }
.mini-btn.chev { top: 28px; }
.mini-ic { width: 16px; height: 16px; fill: none; stroke: #1f2937; stroke-width: 2; stroke-linecap: round; stroke-linejoin: round; }

.cap-widget { position: absolute; right: 0; top: 289px; width: 39px; height: 188px; background: #1a1a1a; border-radius: 6px 0 0 6px; display: flex; flex-direction: column; align-items: center; padding: 7px 0 0 1px; }
.cap-top { flex: none; display: flex; align-items: center; width: 30px; height: 13px; margin-bottom: 10px; }
.cap-logo { width: 12px; height: 12px; fill: #fff; stroke: #fff; stroke-width: 2; }
.cap-dots { display: flex; gap: 1px; margin-left: 4px; }
.cap-dots i { width: 3px; height: 3px; background: #fff; }
.cap-ic { flex: none; width: 29px; height: 25px; fill: #fff; margin-bottom: 14.500px; }
.cap-ic.gear { height: 29px; margin-bottom: 0; }
.cap-hole { fill: #1a1a1a; stroke: none; }
.cap-ring { fill: #fff; }
.cap-tail { stroke: #fff; }
.todo-fab { position: absolute; left: 1857px; top: 814px; width: 47px; height: 47px; border-radius: 50%; background: #fff; border: 1px solid #e5e7eb; box-shadow: 0 2px 6px rgba(0,0,0,.12); display: flex; align-items: center; justify-content: center; }
.todo-ic { width: 16px; height: 16px; fill: none; stroke: #262626; stroke-width: 2.200; stroke-linecap: round; stroke-linejoin: round; }
.hand { position: absolute; left: 746px; top: 510px; width: 28px; height: 28px; }
.hand-fill { fill: #eef5fb; stroke: #000; stroke-width: 2; stroke-linejoin: round; }
.hand-line { fill: none; stroke: #444; stroke-width: 1.500; }

/* Taskbar */
.taskbar { flex: none; height: 71px; background: linear-gradient(90deg, #1f2933 0, #1f2b39 280px, #272727 640px, #272727 100%); display: flex; align-items: center; font-family: "Open Sans", "Noto Sans", sans-serif; color: #fff; position: relative; }
.weather { width: 576px; flex: none; display: flex; align-items: center; padding-left: 32px; position: relative; height: 100%; }
.weather-ic { width: 36px; height: 40px; margin-top: 4px; }
.weather-badge { position: absolute; left: 46px; top: 8px; width: 23px; height: 24px; border-radius: 50%; background: #ff9da0; color: #1c1c1c; font-size: 15px; display: flex; align-items: center; justify-content: center; }
.weather-text { margin-left: 8px; padding-bottom: 2px; }
.temp { font-size: 17px; line-height: 24px; color: #fff; }
.cond { font-size: 17px; line-height: 24px; color: #cfcfcf; }
.win-logo { width: 35px; height: 35px; flex: none; }
.search { width: 330px; height: 48px; margin-left: 20px; flex: none; background: #4a4a4a; border: 1px solid #5c5c5c; border-radius: 24px; display: flex; align-items: center; padding: 0 2px 0 16px; }
.search-ic { width: 24px; height: 24px; fill: none; stroke: #e6e6e6; stroke-width: 2.200; stroke-linecap: round; }
.search-text { flex: 1; margin-left: 16px; font-size: 20px; color: #d6d6d6; }
.emoji { width: 80px; height: 36px; flex: none; }
.tb-apps { display: flex; margin-left: 4px; height: 100%; }
.tb-slot { width: 65.800px; display: flex; align-items: center; justify-content: center; position: relative; padding-bottom: 2px; }
.tb-ic { width: 36px; height: 36px; overflow: visible; }
.ic-letter { font-size: 13px; fill: #dff; text-anchor: middle; }
.dotted::after { content: ""; position: absolute; left: 50%; bottom: 7px; width: 8px; height: 6px; margin-left: -4px; border-radius: 50%; background: #8c8c8c; }
.running::before { content: ""; position: absolute; left: 4px; right: 4px; top: 5px; bottom: 6px; background: #3d3d3d; border-radius: 6px; z-index: 0; }
.running::after { content: ""; position: absolute; left: 50%; bottom: 7px; width: 24px; height: 5px; margin-left: -12px; border-radius: 3px; background: #c6c0e6; }
.running .tb-ic { position: relative; }
.tray { position: absolute; left: 1488px; top: 0; height: 100%; display: flex; }
.tray-slot { display: flex; flex-direction: column; align-items: center; justify-content: center; flex: none; font-size: 17.300px; line-height: 25px; color: #fff; }
.t-lang, .t-time { padding-bottom: 2px; }
.t-up { width: 40px; }
.t-mic { width: 54px; }
.t-lang { width: 62px; }
.t-wifi { width: 52px; }
.t-vol { width: 18px; }
.t-batt { width: 56px; }
.t-time { width: 94px; }
.t-bell { width: 28px; }
.tray-ic { width: 24px; height: 24px; flex: none; fill: none; stroke: #f2f2f2; stroke-width: 1.800; stroke-linecap: round; stroke-linejoin: round; }
.tray-ic.tall { width: 18px; height: 28px; }
.wifi-dim { stroke: #777; }
.wifi-dot { fill: #fff; }
.batt-fill { fill: #f2f2f2; stroke: none; }
```
